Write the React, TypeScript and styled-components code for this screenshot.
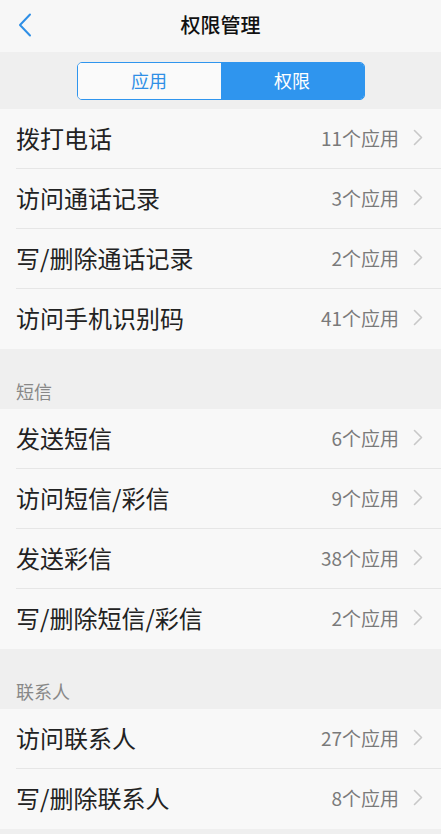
import React from "react";
import styled, { createGlobalStyle } from "styled-components";

const GlobalStyle = createGlobalStyle`
  html, body {
    margin: 0;
    padding: 0;
    background: #efefef;
  }
  body {
    font-family: "Noto Sans CJK SC", "Noto Sans", sans-serif;
  }
`;

const Page = styled.div`
  width: 441px;
  min-height: 834px;
  background: #efefef;
  display: flex;
  flex-direction: column;
`;

const Header = styled.div`
  height: 52px;
  background: #f7f7f7;
  display: flex;
  align-items: center;
  justify-content: center;
  position: relative;
  padding-bottom: 2px;
  box-sizing: border-box;
`;

const BackButton = styled.div`
  position: absolute;
  left: 14px;
  top: 12px;
  width: 22px;
  height: 26px;
  display: flex;
  align-items: center;
  justify-content: center;
`;

const Title = styled.h1`
  margin: 0;
  font-size: 20px;
  font-weight: 500;
  color: #111;
  line-height: 1;
`;

const SegmentBar = styled.div`
  height: 57px;
  display: flex;
  align-items: center;
  justify-content: center;
  background: #efefef;
  padding-top: 1px;
  box-sizing: border-box;
`;

const Segment = styled.div`
  width: 288px;
  height: 38px;
  display: flex;
  border: 1.5px solid #2f95ee;
  border-radius: 5px;
  overflow: hidden;
  box-sizing: border-box;
`;

const SegmentItem = styled.div<{ $active?: boolean }>`
  flex: 1;
  display: flex;
  align-items: center;
  justify-content: center;
  font-size: 18px;
  padding-bottom: 2px;
  background: ${(p) => (p.$active ? "#2f95ee" : "#fafafa")};
  color: ${(p) => (p.$active ? "#ffffff" : "#2f8fe6")};
`;

const Group = styled.div`
  background: #f8f8f8;
`;

const Row = styled.div<{ $last?: boolean }>`
  height: 60px;
  display: flex;
  align-items: center;
  padding: 0 0 4px 16px;
  box-sizing: border-box;
  position: relative;
  &::after {
    content: "";
    display: ${(p) => (p.$last ? "none" : "block")};
    position: absolute;
    left: 16px;
    right: 0;
    bottom: 0;
    height: 1px;
    background: #e6e6e6;
  }
`;

const RowLabel = styled.span`
  flex: 1;
  font-size: 24px;
  color: #222;
`;

const RowCount = styled.span`
  font-size: 19px;
  color: #7a7a7a;
  margin-right: 14px;
`;

const Chevron = styled.div`
  width: 12px;
  margin-right: 16px;
  display: flex;
  align-items: center;
`;

const SectionTitle = styled.div`
  height: 60px;
  display: flex;
  align-items: flex-end;
  padding: 0 0 5px 16px;
  box-sizing: border-box;
  font-size: 18px;
  color: #888;
`;

type Perm = { name: string; count: number };

const sections: { title?: string; items: Perm[] }[] = [
  {
    items: [
      { name: "拨打电话", count: 11 },
      { name: "访问通话记录", count: 3 },
      { name: "写/删除通话记录", count: 2 },
      { name: "访问手机识别码", count: 41 },
    ],
  },
  {
    title: "短信",
    items: [
      { name: "发送短信", count: 6 },
      { name: "访问短信/彩信", count: 9 },
      { name: "发送彩信", count: 38 },
      { name: "写/删除短信/彩信", count: 2 },
    ],
  },
  {
    title: "联系人",
    items: [
      { name: "访问联系人", count: 27 },
      { name: "写/删除联系人", count: 8 },
    ],
  },
];

const App: React.FC = () => {
  return (
    <Page>
      <GlobalStyle />
      <Header>
        <BackButton>
          <svg width="14" height="24" viewBox="0 0 14 24">
            <path d="M12 1.5 L2 12 L12 22.5" fill="none" stroke="#2f8fe6" strokeWidth="2" strokeLinecap="round" strokeLinejoin="round" />
          </svg>
        </BackButton>
        <Title>权限管理</Title>
      </Header>
      <SegmentBar>
        <Segment>
          <SegmentItem>应用</SegmentItem>
          <SegmentItem $active>权限</SegmentItem>
        </Segment>
      </SegmentBar>
      {sections.map((section, i) => (
        <React.Fragment key={i}>
          {section.title && <SectionTitle>{section.title}</SectionTitle>}
          <Group>
            {section.items.map((item, j) => (
              <Row key={item.name} $last={j === section.items.length - 1}>
                <RowLabel>{item.name}</RowLabel>
                <RowCount>{item.count}个应用</RowCount>
                <Chevron>
                  <svg width="10" height="17" viewBox="0 0 10 17">
                    <path d="M1.5 1.5 L8.5 8.5 L1.5 15.5" fill="none" stroke="#c8c8c8" strokeWidth="1.6" strokeLinecap="round" strokeLinejoin="round" />
                  </svg>
                </Chevron>
              </Row>
            ))}
          </Group>
        </React.Fragment>
      ))}
    </Page>
  );
};

export default App;
